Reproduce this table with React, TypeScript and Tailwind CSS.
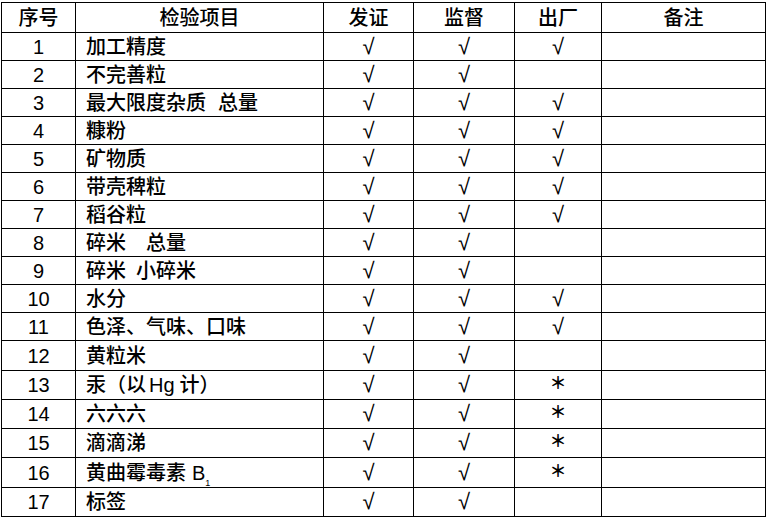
import React from "react";

type Row = { n: string; item: React.ReactNode; c: "" | "check" | "star"; h: string };

const Sp = ({ w }: { w: string }) => <span className={`inline-block ${w}`} />;

const rows: Row[] = [
  { n: "1", item: "加工精度", c: "check", h: "h-[28px]" },
  { n: "2", item: "不完善粒", c: "", h: "h-[28px]" },
  { n: "3", item: <span>最大限度杂质<Sp w="w-[12px]" />总量</span>, c: "check", h: "h-[28px]" },
  { n: "4", item: "糠粉", c: "check", h: "h-[28px]" },
  { n: "5", item: "矿物质", c: "check", h: "h-[28px]" },
  { n: "6", item: "带壳稗粒", c: "check", h: "h-[28px]" },
  { n: "7", item: "稻谷粒", c: "check", h: "h-[28px]" },
  { n: "8", item: <span>碎米<Sp w="w-[20px]" />总量</span>, c: "", h: "h-[28px]" },
  { n: "9", item: <span>碎米<Sp w="w-[10px]" />小碎米</span>, c: "", h: "h-[28px]" },
  { n: "10", item: "水分", c: "check", h: "h-[28px]" },
  { n: "11", item: "色泽、气味、口味", c: "check", h: "h-[28px]" },
  { n: "12", item: "黄粒米", c: "", h: "h-[30px]" },
  { n: "13", item: <span>汞（以<span className="ml-[3px] mr-[5px]">Hg</span>计）</span>, c: "star", h: "h-[29px]" },
  { n: "14", item: "六六六", c: "star", h: "h-[29px]" },
  { n: "15", item: "滴滴涕", c: "star", h: "h-[29px]" },
  { n: "16", item: <span>黄曲霉毒素<Sp w="w-[6px]" />B<sub className="text-[9px] align-[-4px]">1</sub></span>, c: "star", h: "h-[30px]" },
  { n: "17", item: "标签", c: "", h: "h-[29px]" },
];

const cell = "border border-black p-0";

function Check() {
  return <span className="text-[22px] font-normal">√</span>;
}

function Star() {
  return (
    <span
      className="relative top-[-3px] inline-block leading-none text-[17px] font-bold"
      style={{ fontFamily: '"Noto Sans CJK SC", sans-serif' }}
    >
      ＊
    </span>
  );
}

export default function App() {
  return (
    <div className="w-[768px] h-[518px] bg-white pt-[2px] pl-[1px] text-black" style={{ fontFamily: '"Liberation Sans", "Noto Sans CJK SC", sans-serif' }}>
      <table className="border-collapse table-fixed w-[764px] text-[20px] leading-none font-medium">
        <colgroup>
          <col className="w-[74px]" />
          <col className="w-[248px]" />
          <col className="w-[90px]" />
          <col className="w-[101px]" />
          <col className="w-[87px]" />
          <col className="w-[164px]" />
        </colgroup>
        <thead>
          <tr className="h-[30px]">
            <th className={`${cell} font-medium text-center`}>序号</th>
            <th className={`${cell} font-medium text-center`}>检验项目</th>
            <th className={`${cell} font-medium text-center`}>发证</th>
            <th className={`${cell} font-medium text-center`}>监督</th>
            <th className={`${cell} font-medium text-center`}>出厂</th>
            <th className={`${cell} font-medium text-center`}>备注</th>
          </tr>
        </thead>
        <tbody>
          {rows.map((r) => (
            <tr key={r.n} className={r.h}>
              <td className={`${cell} text-center font-normal`}>{r.n}</td>
              <td className={`${cell} pl-[10px] text-left`}>{r.item}</td>
              <td className={`${cell} text-center`}><Check /></td>
              <td className={`${cell} text-center`}><Check /></td>
              <td className={`${cell} text-center`}>
                {r.c === "check" ? <Check /> : r.c === "star" ? <Star /> : null}
              </td>
              <td className={cell}></td>
            </tr>
          ))}
        </tbody>
      </table>
    </div>
  );
}
